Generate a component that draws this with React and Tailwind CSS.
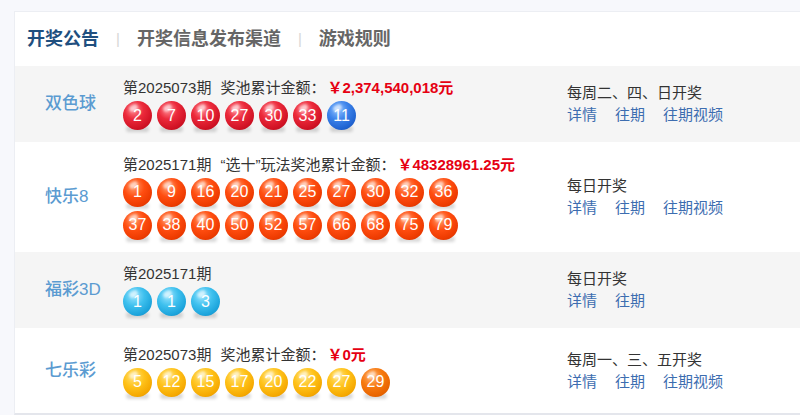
import React from "react";

const ballStyles = {
  red: "bg-[radial-gradient(circle_at_38%_30%,#ff8a94_0%,#ec2a3b_35%,#d01224_70%,#a80a18_100%)]",
  blue: "bg-[radial-gradient(circle_at_38%_30%,#8fc0ff_0%,#3b82ea_38%,#1f62d0_72%,#164aa8_100%)]",
  orange: "bg-[radial-gradient(circle_at_38%_30%,#ff9a6a_0%,#ff4d10_38%,#ec3a00_72%,#c02e00_100%)]",
  sky: "bg-[radial-gradient(circle_at_38%_30%,#9ae4ff_0%,#3ec0ee_38%,#1ba3db_72%,#1282b8_100%)]",
  yellow: "bg-[radial-gradient(circle_at_38%_30%,#ffe27a_0%,#ffc21a_38%,#f5a800_72%,#d88e00_100%)]",
  amber: "bg-[radial-gradient(circle_at_38%_30%,#ffb070_0%,#f77a10_38%,#e86400_72%,#c25000_100%)]",
};

const Ball = ({ n, color }) => (
  <div className="relative w-[29px] h-[29px] shrink-0">
    <div className="absolute left-[3px] right-[3px] -bottom-[2px] h-[6px] rounded-full bg-black/15 blur-[1.5px]" />
    <div
      className={`relative w-[29px] h-[29px] rounded-full flex items-center justify-center text-white text-[16px] leading-none ${ballStyles[color]}`}
    >
      <div className="absolute left-[6px] top-[4px] w-[9px] h-[6px] rounded-full bg-white/60 blur-[1px] -rotate-[30deg]" />
      <span className="relative">{n}</span>
    </div>
  </div>
);

const Balls = ({ list }) => (
  <div className="flex gap-[5px]">
    {list.map((b, i) => (
      <Ball key={i} n={b[0]} color={b[1]} />
    ))}
  </div>
);

const rows = [
  {
    name: "双色球",
    h: "h-[76px]",
    bg: "bg-[#f5f5f5]",
    issue: "第2025073期",
    label: "奖池累计金额：",
    amount: "￥2,374,540,018元",
    balls: [
      [["2", "red"], ["7", "red"], ["10", "red"], ["27", "red"], ["30", "red"], ["33", "red"], ["11", "blue"]],
    ],
    when: "每周二、四、日开奖",
    links: ["详情", "往期", "往期视频"],
  },
  {
    name: "快乐8",
    h: "h-[110px]",
    bg: "bg-white",
    issue: "第2025171期",
    label: "“选十”玩法奖池累计金额：",
    amount: "￥48328961.25元",
    balls: [
      ["1", "9", "16", "20", "21", "25", "27", "30", "32", "36"].map((n) => [n, "orange"]),
      ["37", "38", "40", "50", "52", "57", "66", "68", "75", "79"].map((n) => [n, "orange"]),
    ],
    when: "每日开奖",
    links: ["详情", "往期", "往期视频"],
  },
  {
    name: "福彩3D",
    h: "h-[76px]",
    bg: "bg-[#f5f5f5]",
    issue: "第2025171期",
    balls: [[["1", "sky"], ["1", "sky"], ["3", "sky"]]],
    when: "每日开奖",
    links: ["详情", "往期"],
  },
  {
    name: "七乐彩",
    h: "h-[85px]",
    bg: "bg-white",
    issue: "第2025073期",
    label: "奖池累计金额：",
    amount: "￥0元",
    balls: [
      [["5", "yellow"], ["12", "yellow"], ["15", "yellow"], ["17", "yellow"], ["20", "yellow"], ["22", "yellow"], ["27", "yellow"], ["29", "amber"]],
    ],
    when: "每周一、三、五开奖",
    links: ["详情", "往期", "往期视频"],
  },
];

export default function App() {
  return (
    <div
      className="w-[800px] h-[415px] overflow-hidden bg-[#f7f8fc] pt-[11px]"
      style={{ fontFamily: '"Liberation Sans", "Noto Sans CJK SC", sans-serif' }}
    >
      <div className="ml-[14px] w-[820px] bg-white border border-[#eceef3] border-b-[#e4e6ec] border-b-2">
        {/* Tabs */}
        <div className="h-[54px] flex items-center pl-[12px] text-[18px] font-bold">
          <span className="text-[#1f4f7f]">开奖公告</span>
          <span className="mx-[17px] text-[#d6d6d6] font-normal text-[15px]">|</span>
          <span className="text-[#666]">开奖信息发布渠道</span>
          <span className="mx-[17px] text-[#d6d6d6] font-normal text-[15px]">|</span>
          <span className="text-[#666]">游戏规则</span>
        </div>

        {rows.map((r) => (
          <div key={r.name} className={`flex items-center ${r.h} ${r.bg}`}>
            <div className="w-[108px] pl-[30px] text-[17px] text-[#5b9bd1] font-medium">{r.name}</div>
            <div className="w-[444px] flex flex-col gap-[3px]">
              <div className="text-[15px] leading-[20px] text-[#333]">
                {r.issue}
                {r.label && <span className="ml-[9px]">{r.label}</span>}
                {r.amount && <span className="ml-[2px] text-[#e60012] font-bold">{r.amount}</span>}
              </div>
              <div className="flex flex-col gap-[4px]">
                {r.balls.map((list, i) => (
                  <Balls key={i} list={list} />
                ))}
              </div>
            </div>
            <div className="flex flex-col text-[15px] leading-[22px]">
              <div className="text-[#333]">{r.when}</div>
              <div className="flex gap-[18px] text-[#3d6db0]">
                {r.links.map((l) => (
                  <span key={l}>{l}</span>
                ))}
              </div>
            </div>
          </div>
        ))}
      </div>
    </div>
  );
}
